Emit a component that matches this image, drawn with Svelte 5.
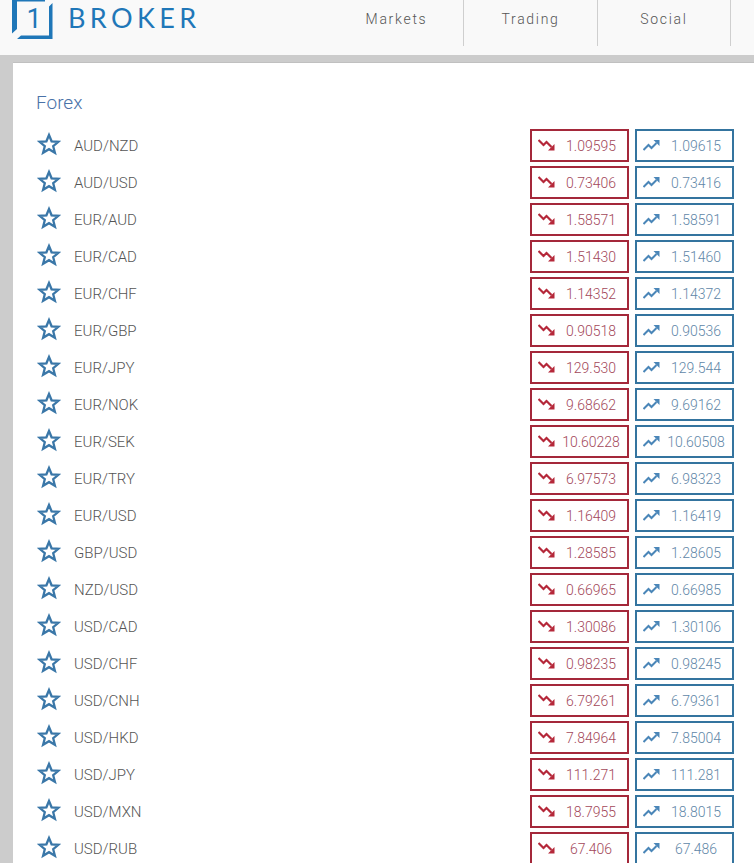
<script>
  const rates = [
    ["AUD/NZD", "1.09595", "1.09615"],
    ["AUD/USD", "0.73406", "0.73416"],
    ["EUR/AUD", "1.58571", "1.58591"],
    ["EUR/CAD", "1.51430", "1.51460"],
    ["EUR/CHF", "1.14352", "1.14372"],
    ["EUR/GBP", "0.90518", "0.90536"],
    ["EUR/JPY", "129.530", "129.544"],
    ["EUR/NOK", "9.68662", "9.69162"],
    ["EUR/SEK", "10.60228", "10.60508"],
    ["EUR/TRY", "6.97573", "6.98323"],
    ["EUR/USD", "1.16409", "1.16419"],
    ["GBP/USD", "1.28585", "1.28605"],
    ["NZD/USD", "0.66965", "0.66985"],
    ["USD/CAD", "1.30086", "1.30106"],
    ["USD/CHF", "0.98235", "0.98245"],
    ["USD/CNH", "6.79261", "6.79361"],
    ["USD/HKD", "7.84964", "7.85004"],
    ["USD/JPY", "111.271", "111.281"],
    ["USD/MXN", "18.7955", "18.8015"],
    ["USD/RUB", "67.406", "67.486"]
  ];
  const tabs = ["Markets", "Trading", "Social"];
</script>

<header class="top">
  <div class="logo">
    <div class="logo-mark">
      <svg viewBox="0 0 41 39" width="41" height="39">
        <path d="M0 0h33v1.500h-28v27.500l-5 4.500z" fill="#1f77b8" />
        <path d="M40.500 3v36h-35.500l4-3.500h28v-29z" fill="#1f77b8" />
      </svg>
      <span>1</span>
    </div>
    <div class="logo-text">BROKER</div>
  </div>
  <nav class="tabs">
    {#each tabs as tab}
      <div class="tab">{tab}</div>
    {/each}
  </nav>
</header>

<main class="panel">
  <h2 class="title">Forex</h2>
  <div class="rows">
    {#each rates as [pair, sell, buy]}
      <div class="row">
        <svg class="star" viewBox="0 0 24 24" width="24" height="24">
          <path d="M12 3l2.600 6.300 6.800.5-5.200 4.400 1.700 6.600-5.900-3.600-5.900 3.600 1.700-6.600-5.200-4.400 6.800-.5z" fill="none" stroke="#3a77a8" stroke-width="2.300" />
        </svg>
        <span class="pair">{pair}</span>
        <div class="price sell">
          <svg class="arrow" viewBox="0 0 17 13" width="17" height="13">
            <path d="M0.500 1l5 5 3-3 5 5" fill="none" stroke="#b5283a" stroke-width="2.200" />
            <path d="M16.500 5v6.500h-6.500z" fill="#b5283a" />
          </svg>
          <span class="value">{sell}</span>
        </div>
        <div class="price buy">
          <svg class="arrow" viewBox="0 0 17 13" width="17" height="13">
            <path d="M0.500 11l5-5 3 3 5-5" fill="none" stroke="#4a86b8" stroke-width="2" />
            <path d="M16.500 1v6l-6-6z" fill="#4a86b8" />
          </svg>
          <span class="value">{buy}</span>
        </div>
      </div>
    {/each}
  </div>
</main>

<style>
  :global(body) {
    background: #cccccc;
    font-family: Roboto, sans-serif;
    overflow: hidden;
  }

  .top {
    display: flex;
    height: 55px;
    background: #f9f9f9;
    overflow: hidden;
  }

  .logo {
    display: flex;
    width: 330px;
    padding-left: 12px;
    box-sizing: border-box;
  }

  .logo-mark {
    position: relative;
    width: 41px;
    height: 39px;
    color: #1f77b8;
    font-size: 27px;
    font-weight: 400;
    text-align: center;
  }

  .logo-mark svg {
    display: block;
  }

  .logo-mark span {
    position: absolute;
    left: 0;
    right: 0;
    top: 3px;
    line-height: 32px;
    padding-left: 3px;
  }

  .logo-text {
    margin-left: 15px;
    font-family: Lato, sans-serif;
    font-size: 27px;
    line-height: 35px;
    letter-spacing: 4.400px;
    color: #1f77b8;
  }

  .tabs {
    display: flex;
    height: 46px;
  }

  .tab {
    width: 133px;
    border-right: 1px solid #cfcfcf;
    text-align: center;
    font-size: 14px;
    font-weight: 300;
    letter-spacing: 1.700px;
    line-height: 38px;
    color: #555555;
  }

  .tab:last-child {
    width: 132px;
  }

  .panel {
    margin: 7px 0 0 13px;
    padding: 29px 20px 0 23px;
    height: 808px;
    background: #ffffff;
    border-top: 1px solid #c0c0c0;
    box-sizing: border-box;
  }

  .title {
    margin: 0 0 16px;
    font-size: 19px;
    font-weight: 300;
    line-height: 21px;
    color: #4a72a8;
  }

  .rows {
    display: flex;
    flex-direction: column;
    gap: 4px;
  }

  .row {
    display: flex;
    align-items: center;
    height: 33px;
    gap: 6px;
  }

  .star {
    margin: 0 0 4px 1px;
    flex-shrink: 0;
  }

  .pair {
    flex: 1;
    margin-left: 7px;
    font-size: 15px;
    font-weight: 300;
    color: #555555;
  }

  .price {
    display: flex;
    align-items: center;
    width: 99px;
    height: 33px;
    padding-left: 6px;
    box-sizing: border-box;
    border: 2px solid;
    font-size: 14px;
    font-weight: 300;
  }

  .sell {
    border-color: #a4283a;
    color: #a3485a;
  }

  .buy {
    border-color: #34749f;
    color: #5f87a8;
  }

  .arrow {
    flex-shrink: 0;
  }

  .value {
    flex: 1;
    text-align: center;
  }
</style>
